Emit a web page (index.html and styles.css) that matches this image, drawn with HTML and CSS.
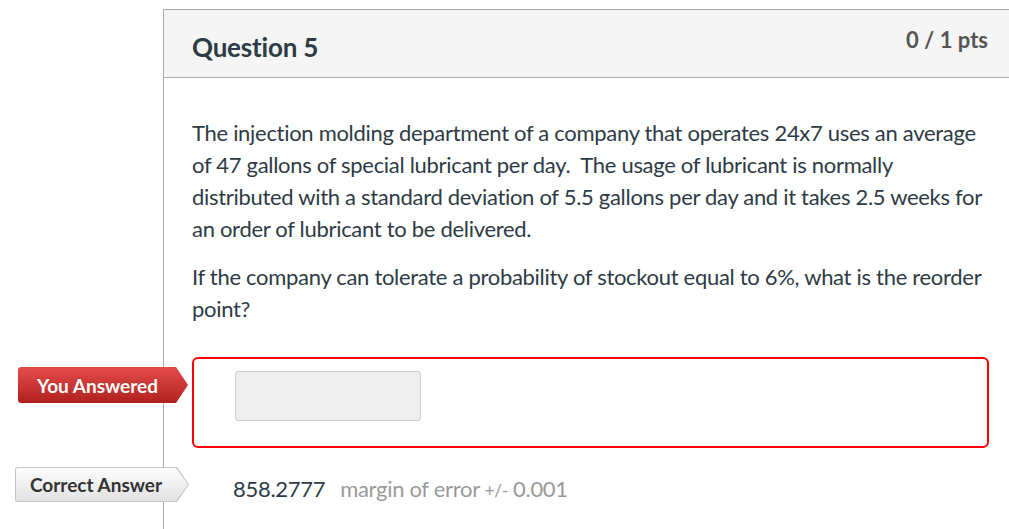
FILE: index.html
```html
<!DOCTYPE html>
<html>
<head>
<meta charset="utf-8">
<link rel="stylesheet" href="styles.css">
</head>
<body>
<div class="page">
  <div class="card">
    <div class="header">
      <h2 class="title">Question 5</h2>
      <div class="pts">0 / 1 pts</div>
    </div>
    <div class="body">
      <p>The injection molding department of a company that operates 24x7 uses an average of 47 gallons of special lubricant per day.&nbsp; The usage of lubricant is normally distributed with a standard deviation of 5.5 gallons per day and it takes 2.5 weeks for an order of lubricant to be delivered.</p>
      <p>If the company can tolerate a probability of stockout equal to 6%, what is the reorder point?</p>
    </div>
    <div class="answers">
      <div class="answer wrong">
        <span class="tag tag-red"><span class="tag-face">You Answered</span></span>
        <div class="input"></div>
      </div>
      <div class="answer correct">
        <span class="tag tag-gray"><span class="tag-face">Correct Answer</span></span>
        <span class="value">858.2777</span>
        <span class="margin">margin of error <span class="pm">+/-</span> 0.001</span>
      </div>
    </div>
  </div>
</div>
</body>
</html>
```

FILE: styles.css
```css
html, body {
  margin: 0;
  padding: 0;
  background: #fff;
  font-family: Lato, "Liberation Sans", sans-serif;
  font-variant-ligatures: none;
  color: #2d3b45;
  overflow: hidden;
}
.page {
  padding: 9px 0 0 163px;
}
.card {
  border-top: 1px solid #aaa;
  border-left: 1px solid #aaa;
  min-height: 520px;
}
.header {
  background: #f5f5f5;
  border-bottom: 1px solid #aaa;
  height: 68px;
  display: flex;
  justify-content: space-between;
  box-sizing: border-box;
  padding: 0 21px 0 28px;
}
.title {
  margin: 0;
  font-size: 26px;
  letter-spacing: -0.2px;
  font-weight: 700;
  line-height: 26px;
  padding-top: 24px;
  color: #2d3b45;
}
.pts {
  font-size: 22px;
  font-weight: 700;
  color: #555;
  padding-top: 18px;
  line-height: 24px;
}
.body {
  padding: 39px 0 0 28px;
  width: 800px;
}
.body p {
  margin: 0 0 16px 0;
  font-size: 22px;
  letter-spacing: -0.3px;
  line-height: 32px;
}
.answers {
  padding-top: 16px;
}
.answer {
  position: relative;
}
.wrong {
  margin-left: 28px;
  width: 797px;
  height: 91px;
  border: 2px solid #f00;
  border-radius: 6px;
  padding: 12px 0 0 41px;
  box-sizing: border-box;
}
.input {
  width: 186px;
  height: 50px;
  background: #eee;
  border: 1px solid #ccc;
  border-radius: 3px;
  box-sizing: border-box;
}
.correct {
  margin-top: 18px;
  padding-left: 69px;
  padding-top: 4px;
  height: 36px;
  display: flex;
  align-items: center;
  font-size: 22px;
  letter-spacing: -0.3px;
}
.value {
  color: #2d3b45;
}
.margin {
  margin-left: 15px;
  color: #999;
}
.pm {
  font-size: 17px;
}
.tag {
  position: absolute;
  font-size: 19px;
  font-weight: 700;
  letter-spacing: 0;
  white-space: nowrap;
  box-sizing: border-box;
}
.tag-face {
  position: absolute;
  display: flex;
  align-items: center;
  box-sizing: border-box;
}
.tag-red {
  left: -176px;
  top: 8px;
  width: 170px;
  height: 36px;
}
.tag-red .tag-face {
  inset: 0;
  padding-left: 19px;
  color: #fff;
  text-shadow: 0 -1px 0 rgba(0,0,0,0.15);
  background: linear-gradient(#e44c4a, #b1211f);
  border-radius: 3px;
  clip-path: polygon(0 0, calc(100% - 12px) 0, 100% 50%, calc(100% - 12px) 100%, 0 100%);
}
.tag-gray {
  left: -149px;
  top: 1px;
  width: 174px;
  height: 35px;
  background: #c4c4c4;
  border-radius: 3px;
  clip-path: polygon(0 0, calc(100% - 12px) 0, 100% 50%, calc(100% - 12px) 100%, 0 100%);
}
.tag-gray .tag-face {
  top: 1px;
  left: 1px;
  right: 1px;
  bottom: 1px;
  padding-left: 14px;
  color: #333;
  background: linear-gradient(#fdfdfd, #e2e2e2);
  border-radius: 2px;
  clip-path: polygon(0 0, calc(100% - 12px) 0, 100% 50%, calc(100% - 12px) 100%, 0 100%);
}
```
